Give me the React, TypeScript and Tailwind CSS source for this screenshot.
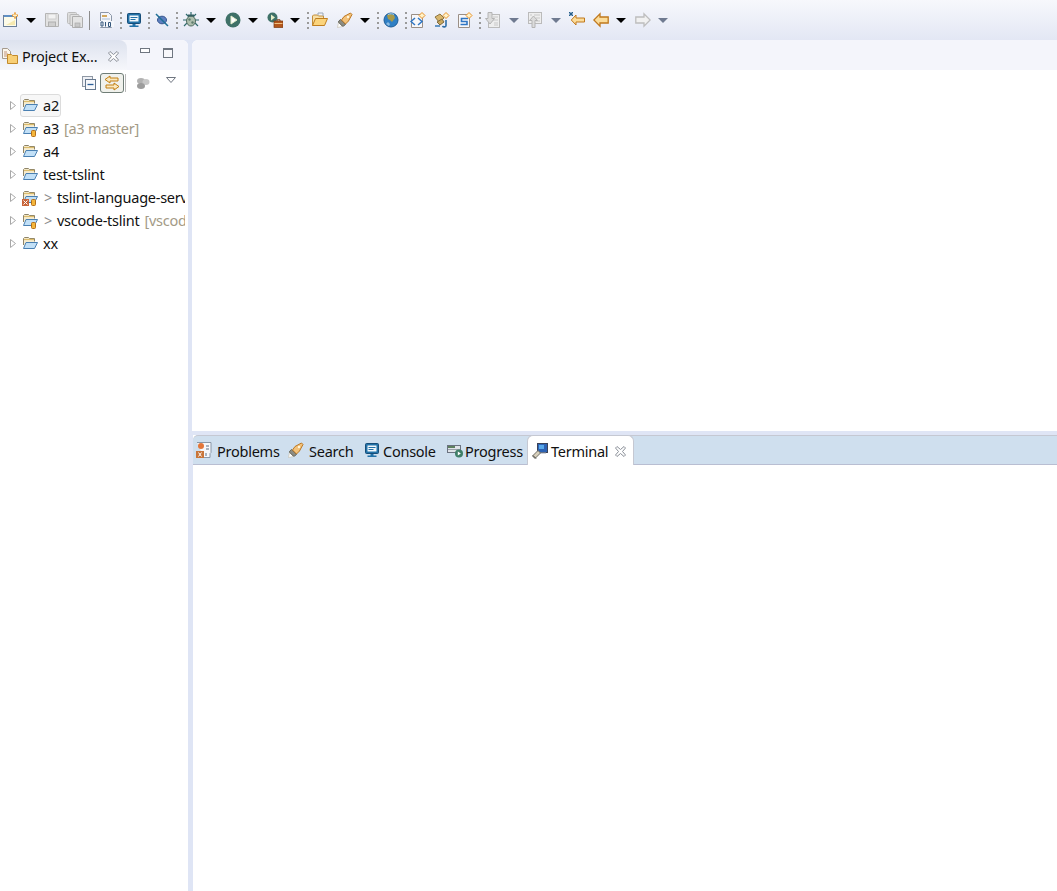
import type { ReactNode } from "react";

type IconProps = { className?: string };

function Icon({ className = "", children }: IconProps & { children: ReactNode }) {
  return (
    <svg viewBox="0 0 16 16" className={`w-4 h-4 shrink-0 ${className}`} fill="none">
      {children}
    </svg>
  );
}

function Arrow({ className = "", muted }: IconProps & { muted?: boolean }) {
  return (
    <svg viewBox="0 0 10 5" className={`w-[10px] h-[5px] shrink-0 ${className}`}>
      <path d="M0 0h10L5 5z" fill={muted ? "#6f7a90" : "#000"} />
    </svg>
  );
}

function Dots({ className = "" }: IconProps) {
  return (
    <div className={`w-[2px] h-[17px] shrink-0 flex flex-col justify-between ${className}`}>
      <span className="h-[2px] bg-[#9a9a9a]" />
      <span className="h-[2px] bg-[#9a9a9a]" />
      <span className="h-[2px] bg-[#9a9a9a]" />
      <span className="h-[2px] bg-[#9a9a9a]" />
    </div>
  );
}

function NewFile({ className }: IconProps) {
  return (
    <Icon className={className}>
      <rect x="0.5" y="3.5" width="13" height="11" fill="#fdfbe8" stroke="#6b7f99" />
      <rect x="1" y="3" width="12" height="2" fill="#5f8fc4" />
      <path d="M3 13L12 8v5z" fill="#f6e9b0" />
      <path d="M12 0.5v6M9 3.5h6" stroke="#e8962e" strokeWidth="2" />
      <path d="M12 1.5v4M10 3.5h4" stroke="#fff2c8" />
    </Icon>
  );
}

function Save({ className }: IconProps) {
  return (
    <Icon className={className}>
      <path d="M1.5 1.5h12l1 1v12h-13z" fill="#e2e2e2" stroke="#b4b4b4" />
      <rect x="4" y="2" width="8" height="5" fill="#f2f2f2" stroke="#c4c4c4" strokeWidth="0.7" />
      <rect x="4.5" y="10" width="7" height="4.5" fill="#cfcfcf" stroke="#b0b0b0" />
    </Icon>
  );
}

function SaveAll({ className }: IconProps) {
  return (
    <Icon className={className}>
      <rect x="0.5" y="0.5" width="9" height="11" rx="1" fill="#dedede" stroke="#bcbcbc" />
      <rect x="3" y="2.5" width="9" height="11" rx="1" fill="#e2e2e2" stroke="#b8b8b8" />
      <path d="M5.5 4.5h9l1 1v10h-10z" fill="#e4e4e4" stroke="#aeaeae" />
      <rect x="8" y="11" width="5" height="4" fill="#c8c8c8" stroke="#aaa" strokeWidth="0.7" />
    </Icon>
  );
}

function Binary({ className }: IconProps) {
  return (
    <Icon className={className}>
      <path d="M2.5 .5h8l3 3v12h-11z" fill="#f4f6fb" stroke="#8c97a8" />
      <rect x="4" y="3" width="5" height="2" fill="#d2a95f" />
      <path d="M4 7h8" stroke="#a9bdd4" />
      <rect x="1" y="9" width="15" height="6" fill="#f4f6fb" />
      <path d="M2.500 10v4h2v-4zM7 10v4.500M10 10.500v4h2v-4h-2z" stroke="#34577c" transform="translate(.5 0)" />
    </Icon>
  );
}

function Monitor({ className }: IconProps) {
  return (
    <Icon className={className}>
      <rect x="1.500" y="1.500" width="13" height="10" rx="1" fill="#2272a8" stroke="#174d78" />
      <rect x="3.500" y="3.500" width="9" height="6" fill="#f2f7fb" />
      <path d="M4.500 5.500h7M4.500 7.500h5" stroke="#2272a8" />
      <path d="M6.500 12h3v1.500h3V15h-9v-1.500h3z" fill="#2272a8" />
    </Icon>
  );
}

function SkipBreak({ className }: IconProps) {
  return (
    <Icon className={className}>
      <ellipse cx="8" cy="8" rx="4.500" ry="3.800" fill="#5d7fc0" stroke="#34558e" />
      <path d="M2 2l12 12" stroke="#1f6f96" strokeWidth="1.500" />
    </Icon>
  );
}

function Bug({ className }: IconProps) {
  return (
    <Icon className={className}>
      <path d="M3 2l3 3M13 2l-3 3M0 8h4M12 8h4M1 14l3-3M15 14l-3-3M8 0v3" stroke="#2f6b6e" strokeWidth="1.200" />
      <ellipse cx="8" cy="9" rx="4.500" ry="5" fill="#aebfae" stroke="#4f6b5e" />
      <circle cx="6.500" cy="7.500" r="1.200" fill="#5f7d6e" />
      <circle cx="9.500" cy="10.500" r="1.200" fill="#5f7d6e" />
      <path d="M5 3.500h6" stroke="#355f62" strokeWidth="2" />
    </Icon>
  );
}

function Run({ className }: IconProps) {
  return (
    <Icon className={className}>
      <circle cx="8" cy="8" r="7.500" fill="#3f7168" />
      <path d="M6 4l6 4-6 4z" fill="#fff" stroke="#e2edc9" />
    </Icon>
  );
}

function External({ className }: IconProps) {
  return (
    <Icon className={className}>
      <circle cx="5.500" cy="5.500" r="5" fill="#3f7168" />
      <path d="M4 2.500l4 3-4 3z" fill="#e6efc8" />
      <rect x="7" y="9" width="9" height="6.500" fill="#b4571c" stroke="#7a3a12" strokeWidth="0.700" />
      <path d="M7.500 11.500h8" stroke="#f0c080" />
      <path d="M10 9V7.800h3V9" stroke="#7a3a12" />
    </Icon>
  );
}

function OpenFolder({ className }: IconProps) {
  return (
    <Icon className={className}>
      <path d="M.5 13.500V4l1-1h4l1 1h5v2" fill="#f7dfa6" stroke="#c28e3a" />
      <path d="M.5 13.500l3-7h12l-3 7z" fill="#fbd47c" stroke="#c07e1f" />
      <path d="M6 3V1h5v3" stroke="#9aa7b6" />
    </Icon>
  );
}

function Rocket({ className }: IconProps) {
  return (
    <Icon className={className}>
      <path d="M1.500 10.500l-1 5 5-1z" fill="#fff" stroke="#c9c4b4" strokeWidth="0.700" />
      <path d="M3.500 7.500l5 5-2 1.500-1 .2-4-4 .2-1z" fill="#8c8c82" stroke="#66665c" />
      <path d="M7 4.500l6.500-3.500 1.500 1.500-3.500 6.500-3 3-4-4z" fill="#f3c27a" stroke="#bb7722" />
      <circle cx="11" cy="5" r="1.200" fill="#fff6dc" />
    </Icon>
  );
}

function Globe({ className }: IconProps) {
  return (
    <Icon className={className}>
      <circle cx="8" cy="8" r="7" fill="#2f7fc4" stroke="#1f5d96" />
      <path d="M4 3l3-1 4 1 1 3-3 4-2-2-2-1z" fill="#a89a4a" />
      <path d="M3 12l2-2 2 2-1 2z" fill="#8cbce2" />
      <path d="M5 2.500c2-1 5-1 6 0" stroke="#a8d4f2" />
    </Icon>
  );
}

function Spark({ x = 12, y = 3.500 }: { x?: number; y?: number }) {
  return <path d={`M${x} ${y - 3}l3 3-3 3-3-3z`} fill="#fff3c8" stroke="#e8902a" />;
}

function NewType({ className, letter }: IconProps & { letter: "d" | "s" }) {
  return (
    <Icon className={className}>
      <path d="M1.500 2.500h11v13h-11z" fill="#f8f8fa" stroke="#9a8f86" />
      {letter === "d" ? (
        <path d="M5 6L1 9.500 5 13M8 6l4 3.500L8 13" stroke="#2f76c4" strokeWidth="1.500" />
      ) : (
        <path d="M11 6.500H4.500v3H10v3H3.500" stroke="#2f76c4" strokeWidth="1.600" />
      )}
      <Spark />
    </Icon>
  );
}

function NewRes({ className }: IconProps) {
  return (
    <Icon className={className}>
      <path d="M1 5l5-3 4 4-5 4z" fill="#d8b66d" stroke="#8d7540" />
      <path d="M3 10l5-3 2 3-4 3z" fill="#c9a860" stroke="#7e6a3c" />
      <path d="M12 8v5.500c0 1.500-2.500 2-3.500.5" stroke="#2f6fa8" strokeWidth="1.600" />
      <path d="M1 14h5" stroke="#3a7ab4" strokeWidth="1.500" />
      <Spark />
    </Icon>
  );
}

function DownDoc({ className }: IconProps) {
  return (
    <Icon className={className}>
      <rect x="3.500" y="2.500" width="11" height="13" fill="#eee" stroke="#bbb" />
      <path d="M8 5h5M8 8h5M9 11h4M9 13h4" stroke="#c8c8c8" />
      <path d="M3 .5h4v6h2.500L5 12 .5 6.500H3z" fill="#dcdcdc" stroke="#b4b4b4" />
    </Icon>
  );
}

function UpDoc({ className }: IconProps) {
  return (
    <Icon className={className}>
      <rect x="1.500" y="0.500" width="13" height="11" fill="#eee" stroke="#bbb" />
      <path d="M7 3h6M9 6h4M9 9h4M3 3h2" stroke="#c8c8c8" />
      <path d="M5 15.500v-7H2.500L6.500 4l4 4.500H8v7z" fill="#dcdcdc" stroke="#b4b4b4" />
    </Icon>
  );
}

function LastEdit({ className }: IconProps) {
  return (
    <Icon className={className}>
      <path d="M5.500 4V1L0.800 6 5.500 11V8h8.500V4z" transform="translate(1.500 2)" fill="#fbdc9a" stroke="#c0781c" />
      <path d="M0 0l4 4M4 0L0 4M2 0v4M0 2h4" stroke="#255f8c" />
    </Icon>
  );
}

function BackArrow({ className }: IconProps) {
  return (
    <Icon className={className}>
      <path d="M7 4V.8L.8 7 7 13.200V10h8.200V4z" transform="translate(0 1)" fill="#fbdc9a" stroke="#c0781c" strokeWidth="1.300" />
    </Icon>
  );
}

function ForwardArrow({ className }: IconProps) {
  return (
    <Icon className={className}>
      <path d="M9 4V.8L15.200 7 9 13.200V10H.8V4z" transform="translate(0 1)" fill="#f1f1f1" stroke="#bdbdbd" strokeWidth="1.300" />
    </Icon>
  );
}

function Close({ className = "" }: IconProps) {
  return (
    <svg viewBox="0 0 11 11" className={`w-[11px] h-[11px] shrink-0 ${className}`} fill="none">
      <path
        d="M.5 2L2 .5l3.500 3L9 .5 10.500 2l-3 3.500 3 3.500L9 10.500l-3.500-3-3.500 3L.5 9l3-3.500z"
        fill="#fff"
        stroke="#8a8f98"
      />
    </svg>
  );
}

function ProjectExplorerIcon({ className }: IconProps) {
  return (
    <Icon className={className}>
      <path d="M.5 .5h5l3 3v7h-8z" fill="#fbf6ec" stroke="#a59a8d" />
      <path d="M2 4h3M2 6h4M2 8h3" stroke="#c0937a" />
      <path d="M5.500 8V6.500h4l1 1h5v8h-10z" fill="#f8cf76" stroke="#c28a2c" />
    </Icon>
  );
}

function ProblemsIcon({ className }: IconProps) {
  return (
    <Icon className={className}>
      <path d="M1 .5h14v10l-1 1v4H8" fill="#f7f8fb" stroke="#8a98a8" />
      <circle cx="5" cy="4" r="3" fill="#e2763a" />
      <rect x="0" y="9" width="8" height="7" fill="#c9753a" />
      <path d="M2.500 10.500l3 4M5.500 10.500l-3 4" stroke="#fff" />
      <path d="M10 4h3M10 7h3M10 11v3" stroke="#5d6f82" />
    </Icon>
  );
}

function ProgressIcon({ className }: IconProps) {
  return (
    <Icon className={className}>
      <rect x="0.500" y="3.500" width="13" height="7" fill="#dfe3e8" stroke="#6b7280" />
      <rect x="1" y="4" width="7" height="2" fill="#5d7f5e" />
      <rect x="1" y="7" width="12" height="1" fill="#9aa0a8" />
      <circle cx="12" cy="11.500" r="4" fill="#3f7f68" />
      <path d="M10.800 9.500l3 2-3 2z" fill="#fff" />
    </Icon>
  );
}

function TerminalIcon({ className }: IconProps) {
  return (
    <Icon className={className}>
      <rect x="5.500" y="0.500" width="10" height="9" fill="#2b62b4" stroke="#3a4258" />
      <rect x="7" y="2" width="5" height="4" fill="#58a8ea" />
      <path d="M6 10h8" stroke="#9aa4b4" />
      <path d="M.5 13l5.500-5.500 2.500 2.500L3 15.500z" fill="#d8d0bc" stroke="#6f6d62" />
      <path d="M1 12.500l3 3" stroke="#444" />
    </Icon>
  );
}

function Folder({ decor, error, className = "" }: { decor?: boolean; error?: boolean; className?: string }) {
  return (
    <svg viewBox="0 0 20 16" className={`w-[20px] h-4 shrink-0 ${className}`} fill="none">
      <path d="M4.500 9V2.500l1-1h4l1 1h5v3" fill="#f6ecd0" stroke="#8e8468" />
      <path d="M5 3.500h10" stroke="#dcbc6c" strokeWidth="1.200" />
      <path d="M4.500 12.500l2.500-6h11.500l-3 6z" fill="#c2e0f7" stroke="#4a80b2" />
      {decor && <rect x="12.500" y="9.500" width="4" height="6" rx="1" fill="#f4b63c" stroke="#b5701a" />}
      {error && (
        <>
          <rect x="3" y="9" width="7" height="7" fill="#c8653a" />
          <path d="M4.500 10.500l4 4M8.500 10.500l-4 4" stroke="#fff" />
        </>
      )}
    </svg>
  );
}

function Row({
  name,
  extra,
  decor,
  error,
  mark,
  active,
}: {
  name: string;
  extra?: string;
  decor?: boolean;
  error?: boolean;
  mark?: boolean;
  active?: boolean;
}) {
  return (
    <div className="h-[23px] flex items-center whitespace-nowrap">
      <svg viewBox="0 0 6 9" className="w-[6px] h-[9px] ml-[10px] shrink-0" fill="#fff">
        <path d="M.5.5v8l5-4z" stroke="#a8a8a8" />
      </svg>
      {active ? (
        <div className="ml-[4px] w-[41px] h-[23px] flex items-center rounded-[3px] border border-[#dcdcdc] bg-[#f7f7f7]">
          <Folder className="ml-[-2px]" />
          <span className="ml-[4px] text-[#111]">{name}</span>
        </div>
      ) : (
        <div className="ml-[3px] flex items-center">
          <Folder decor={decor} error={error} />
          {mark && <span className="ml-[5px] w-[11px] text-[#8a8a8a]">&gt;</span>}
          <span className={mark ? "ml-[2px] text-[#111]" : "ml-[4px] text-[#111]"}>{name}</span>
          {extra && <span className="ml-[5px] text-[#a39a86]">{extra}</span>}
        </div>
      )}
    </div>
  );
}

function BottomTab({
  icon,
  label,
  className = "",
}: {
  icon: ReactNode;
  label: string;
  className?: string;
}) {
  return (
    <div className={`flex items-center text-[#111] ${className}`}>
      {icon}
      <span className="mt-[3px]">{label}</span>
    </div>
  );
}

export default function App() {
  return (
    <div className="w-[1057px] h-[891px] overflow-hidden bg-[#dfe5f5] flex flex-col text-[14.5px] font-['Open_Sans','Noto_Sans',sans-serif] tracking-[-0.25px]">
      <div className="h-[40px] flex items-center pl-[3px] shrink-0 bg-gradient-to-b from-[#f7f8fc] to-[#e3e7f4]">
        <NewFile />
        <Arrow className="ml-[7px]" />
        <Save className="ml-[8px]" />
        <SaveAll className="ml-[7px]" />
        <div className="ml-[6px] w-px h-[19px] bg-[#8c8c8c]" />
        <Binary className="ml-[8px]" />
        <Dots className="ml-[6px]" />
        <Monitor className="ml-[4px]" />
        <Dots className="ml-[6px]" />
        <SkipBreak className="ml-[4px]" />
        <Dots className="ml-[6px]" />
        <Bug className="ml-[5px]" />
        <Arrow className="ml-[7px]" />
        <Run className="ml-[9px]" />
        <Arrow className="ml-[7px]" />
        <External className="ml-[9px]" />
        <Arrow className="ml-[7px]" />
        <Dots className="ml-[7px]" />
        <OpenFolder className="ml-[3px]" />
        <Rocket className="ml-[9px]" />
        <Arrow className="ml-[7px]" />
        <Dots className="ml-[7px]" />
        <Globe className="ml-[4px]" />
        <Dots className="ml-[6px]" />
        <NewType letter="d" className="ml-[3px]" />
        <NewRes className="ml-[8px]" />
        <NewType letter="s" className="ml-[7px]" />
        <Dots className="ml-[6px]" />
        <DownDoc className="ml-[4px]" />
        <Arrow muted className="ml-[8px]" />
        <UpDoc className="ml-[8px]" />
        <Arrow muted className="ml-[8px]" />
        <LastEdit className="ml-[8px]" />
        <BackArrow className="ml-[8px]" />
        <Arrow className="ml-[7px]" />
        <ForwardArrow className="ml-[9px]" />
        <Arrow muted className="ml-[7px]" />
      </div>

      <div className="flex-1 flex min-h-0">
        {/* left: project explorer */}
        <div className="w-[188px] shrink-0 bg-white flex flex-col rounded-tr-[6px]">
          <div className="h-[30px] flex bg-[#f4f5fb] rounded-tr-[6px]">
            <div className="w-[127px] flex items-center pl-[2px] rounded-tr-[8px] bg-gradient-to-b from-[#dde2ee] to-[#f6f7fb]">
              <ProjectExplorerIcon className="mt-[2px]" />
              <span className="ml-[4px] mt-[3px] text-[#111]">Project Ex...</span>
              <Close className="ml-[11px] mt-[2px]" />
            </div>
            <div className="flex-1 flex items-start pt-[8px] pl-[13px]">
              <div className="w-[10px] h-[5px] border border-[#6f7680] bg-white" />
              <div className="ml-[13px] w-[10px] h-[10px] border border-[#6f7680] border-t-[2px] bg-[#f8f8fb]" />
            </div>
          </div>
          <div className="h-[24px] pt-[2px] flex items-center pl-[82px] shrink-0">
            <svg viewBox="0 0 14 14" className="w-[14px] h-[14px] shrink-0" fill="none">
              <rect x="0.500" y="0.500" width="10" height="10" fill="#eef0f5" stroke="#8f98a4" />
              <rect x="3.500" y="3.500" width="10" height="10" fill="#f7f8fb" stroke="#66788e" />
              <path d="M5.500 8.500h6" stroke="#2c5e98" strokeWidth="1.300" />
            </svg>
            <div className="ml-[4px] w-[24px] h-[20px] flex items-center justify-center rounded-[3px] border border-[#6f7d76] bg-[#f0f1ec]">
              <svg viewBox="0 0 16 16" className="w-4 h-4" fill="none">
                <path d="M6 1L1 4.500 6 8V6h8V3H6z" fill="#fbe8bd" stroke="#c27f12" />
                <path d="M10 8l5 3.500-5 3.500v-2H2v-3h8z" fill="#fbe8bd" stroke="#c27f12" />
              </svg>
            </div>
            <div className="ml-[1px] w-px h-[18px] bg-[#b8b8b8]" />
            <svg viewBox="0 0 14 14" className="ml-[10px] w-[14px] h-[14px] shrink-0">
              <ellipse cx="5" cy="5" rx="4" ry="3" fill="#b2b2b2" />
              <ellipse cx="10" cy="6" rx="3.500" ry="3" fill="#c8c8c8" />
              <ellipse cx="5" cy="10" rx="4" ry="3" fill="#9d9d9d" />
            </svg>
            <svg viewBox="0 0 10 6" className="ml-[16px] mb-[6px] w-[10px] h-[6px] shrink-0" fill="#fff">
              <path d="M.5.5h9L5 5.500z" stroke="#6f7680" />
            </svg>
          </div>
          <div className="w-[185px] overflow-hidden">
            <Row name="a2" active />
            <Row name="a3" extra="[a3 master]" decor />
            <Row name="a4" />
            <Row name="test-tslint" />
            <Row name="tslint-language-server" mark decor error />
            <Row name="vscode-tslint" extra="[vscode-tslint master]" mark decor />
            <Row name="xx" />
          </div>
        </div>

        {/* right: editor + terminal */}
        <div className="flex-1 flex flex-col min-w-0 ml-[4px]">
          <div className="h-[391px] shrink-0 bg-white rounded-tl-[6px] flex flex-col">
            <div className="h-[30px] bg-[#f4f5fb] rounded-tl-[6px]" />
          </div>
          <div className="h-[4px] shrink-0" />
          <div className="flex-1 flex flex-col ml-px bg-white">
            <div className="h-[30px] shrink-0 flex items-stretch pl-[3px] bg-[#cfdfee] border-t border-b border-t-[#c5c8d2] border-b-[#b9bed2] rounded-tl-[5px]">
              <BottomTab icon={<ProblemsIcon />} label="Problems" className="w-[92px] gap-[5px]" />
              <BottomTab icon={<Rocket />} label="Search" className="w-[76px] gap-[5px]" />
              <BottomTab icon={<Monitor />} label="Console" className="w-[83px] gap-[3px]" />
              <BottomTab icon={<ProgressIcon />} label="Progress" className="w-[80px] gap-[2px]" />
              <div className="w-[107px] h-[30px] mt-[-1px] flex items-center pl-[4px] bg-white border border-b-0 border-[#c5c8d2] rounded-t-[6px] text-[#111]">
                <TerminalIcon />
                <span className="ml-[3px] mt-[2px]">Terminal</span>
                <Close className="ml-[7px] mt-[1px]" />
              </div>
            </div>
            <div className="flex-1 bg-white" />
          </div>
        </div>
      </div>
    </div>
  );
}
